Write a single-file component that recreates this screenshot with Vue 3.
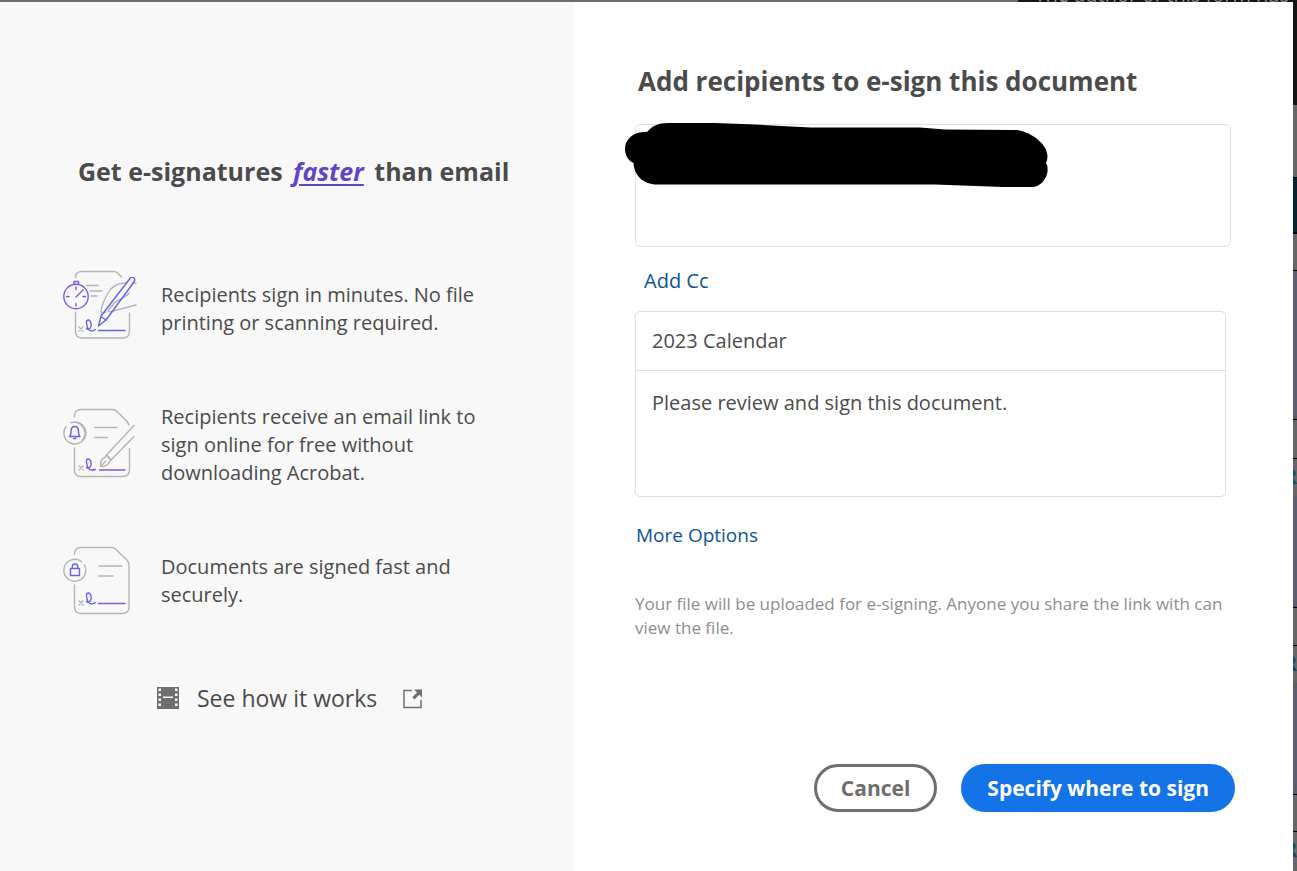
<template>
  <div class="page">
    <div class="page-top">
      <span class="page-note">The author of this form has</span>
    </div>

    <div class="page-body">
      <main class="dialog">
        <!-- Left side: benefits -->
        <section class="intro">
          <h2 class="intro-title">Get e-signatures <em>faster</em> than email</h2>

          <ul class="benefits">
            <li v-for="item in benefits" :key="item.icon" class="benefit">
              <svg
                v-if="item.icon === 'timer'"
                class="benefit-icon"
                viewBox="0 4 100 90"
                aria-hidden="true"
              >
                <g class="grey">
                  <path d="M25.500 17.500C25.500 13.500 28 11.500 32 11.500H64Q66 11.500 67.500 13L71.500 17" />
                  <path d="M25.500 52V71Q25.500 78 32.500 78H72.500Q79.500 78 79.500 71V53" />
                  <path d="M36.500 25.500H48M40 31H52M41 36H47" />
                  <path d="M77 23C69 22.500 62 26 58 33C55 38 52 45 51 51C51 54 53 54 56 52" />
                  <path d="M79 33C75 38 68 40 64 43L58 51C61 53 64 51 67 50L86 45M82 23H86" />
                  <path d="M29 67L33 71M33 67L29 71" />
                </g>
                <g class="violet">
                  <circle cx="26" cy="36.500" r="12.200" />
                  <path d="M24 24V21.500H28.500V24M26 27V29.500M26 43.500V46M16.500 36.500H19M33 36.500H35.500M26 37L33 30" />
                  <path d="M80 18.500Q82 16.500 84 18Q85.500 19.500 84 22L56 60L48.500 66L51 56Z" />
                  <path d="M51.500 57L56 60" />
                  <path d="M36.500 68.500C39 71 42 67 41 63C40 59 36 59 36.500 63C37 68 39 71 41.500 71Q43 71 45.500 69.500" />
                  <path d="M48.500 70.500H75" />
                </g>
              </svg>
              <svg
                v-else-if="item.icon === 'bell'"
                class="benefit-icon"
                viewBox="0 0 100 90"
                aria-hidden="true"
              >
                <g class="grey">
                  <path d="M24.500 17V16Q24.500 9.500 31 9.500H62Q65 9.500 67 11.500L76.500 21Q78 22.500 79 25" />
                  <path d="M24.500 48V70Q24.500 76.500 31 76.500H72.500Q79.500 76.500 79.500 69.500V48.500" />
                  <path d="M16 26.500A11 11 0 1 0 21 22.700M25.500 22.200A11 11 0 0 1 32 40.500" />
                  <path d="M44.500 27.500H67M44.500 37.500H57.500" />
                  <path d="M84 25.500L56.500 55L61 60L84 36.500" />
                  <path d="M56.500 55L61 60L59 62.500C57 66.500 53 67 50.500 66C51 62 50.500 59 55 57.500Z" />
                  <path d="M51 66L56 61" />
                  <path d="M29 66L33 70M33 66L29 70" />
                </g>
                <g class="violet">
                  <path d="M19.500 36.500C21 35.500 21 34 21 31.500C21 28.500 22.500 26.500 24.800 26.500S28.500 28.500 28.500 31.500C28.500 34 28.500 35.500 30 36.500ZM23.500 38.500H26" />
                  <path d="M36.500 67.500C39 70 42 66 41 62C40 58 36 58 36.500 62C37 67 39 70 41.500 70Q43 70 45.500 69.500" />
                  <path d="M49.500 70H75" />
                </g>
              </svg>
              <svg
                v-else
                class="benefit-icon"
                viewBox="0 -2 100 90"
                aria-hidden="true"
              >
                <g class="grey">
                  <path d="M24.500 16.500V16Q24.500 9.500 31 9.500H61Q64 9.500 66 11.500L76.500 21.500Q79 24 79 27V69Q79 75.500 72 75.500H31.500Q24.500 75.500 24.500 68.500V47" />
                  <path d="M31.500 23.500A11 11 0 1 0 34.500 27" />
                  <path d="M49 28H72M49 38H63" />
                  <path d="M29 63L33 67M33 63L29 67" />
                </g>
                <g class="violet">
                  <path d="M20.500 30.500H29.500V37.500H20.500ZM22.300 30.500V28.500Q22.300 26 25 26T27.700 28.500V30.500" />
                  <path d="M36.500 63.500C39 66 42 62 41 58C40 54 36 54 36.500 58C37 63 39 66 41.500 66Q43 66 45.500 64.500" />
                  <path d="M48.500 65.500H75" />
                </g>
              </svg>
              <p>{{ item.text }}</p>
            </li>
          </ul>

          <a href="#" class="how-link">
            <svg class="film-icon" viewBox="0 0 22 22" aria-hidden="true">
              <path class="film" d="M0 0H22V22H0Z" />
              <path
                class="holes"
                d="M1.500 1.500h2.500v2.500h-2.500zM1.500 6.500h2.500v2.500h-2.500zM1.500 11.500h2.500v2.500h-2.500zM1.500 16.500h2.500v2.500h-2.500zM18 1.500h2.500v2.500h-2.500zM18 6.500h2.500v2.500h-2.500zM18 11.500h2.500v2.500h-2.500zM18 16.500h2.500v2.500h-2.500zM6 9.500h10v1.500h-10z"
              />
            </svg>
            <span>See how it works</span>
            <svg class="open-icon" viewBox="0 0 20 20" aria-hidden="true">
              <path class="frame" d="M9 1.500H1V18.500H18V11" />
              <path class="arrow" d="M11 .5H19V8.500L16.200 5.800L11.500 10.500L9.300 8.300L14 3.500Z" />
            </svg>
          </a>
        </section>

        <!-- Right side: recipients form -->
        <form class="sign-form" @submit.prevent>
          <label for="recipients" class="form-title">Add recipients to e-sign this document</label>

          <div class="recipients-box">
            <textarea id="recipients" v-model="recipients" class="recipients"></textarea>
            <svg class="redaction" viewBox="0 0 424 66" aria-hidden="true">
              <path
                d="M22 10C27 4 34 1 42 1H90L130 2.500L186 5.500H295L320 7.500L390 8C402 8 422 20 422.500 34Q422.500 38 421 41C423 44 422.500 46 422.500 50C421 58 415 65 407 65H378L310 62.500H32C18 62.500 9 53 8.500 41C4 39 0 34 0 27C0 17 8 9.500 22 10Z"
              />
            </svg>
          </div>

          <button type="button" class="link-btn cc-btn">Add Cc</button>

          <div class="message-box">
            <input v-model="subject" type="text" class="subject" aria-label="Subject" />
            <textarea v-model="message" class="message" aria-label="Message"></textarea>
          </div>

          <button type="button" class="link-btn more-btn">More Options</button>

          <p class="hint">
            Your file will be uploaded for e-signing. Anyone you share the link with can view the file.
          </p>

          <div class="actions">
            <button type="button" class="btn cancel">Cancel</button>
            <button type="submit" class="btn primary">Specify where to sign</button>
          </div>
        </form>
      </main>

      <!-- Sliver of the document behind the dialog -->
      <div class="page-edge" aria-hidden="true">
        <div
          v-for="(part, index) in edgeParts"
          :key="index"
          :class="['edge-part', part.kind]"
          :style="{ flexGrow: part.size }"
        >
          <span v-if="part.kind === 'letter'">R</span>
        </div>
      </div>
    </div>
  </div>
</template>

<script setup>
import { ref } from "vue";

const recipients = ref("");
const subject = ref("2023 Calendar");
const message = ref("Please review and sign this document.");

const benefits = [
  {
    icon: "timer",
    text: "Recipients sign in minutes. No file printing or scanning required.",
  },
  {
    icon: "bell",
    text: "Recipients receive an email link to sign online for free without downloading Acrobat.",
  },
  {
    icon: "lock",
    text: "Documents are signed fast and securely.",
  },
];

// size is the share of the page height that each part takes
const edgeParts = [
  { kind: "toolbar", size: 104 },
  { kind: "paper", size: 73 },
  { kind: "banner", size: 55 },
  { kind: "paper lined", size: 36 },
  { kind: "field lined", size: 150 },
  { kind: "paper lined", size: 38 },
  { kind: "letter", size: 38 },
  { kind: "field", size: 112 },
  { kind: "paper lined", size: 37 },
  { kind: "letter", size: 38 },
  { kind: "field", size: 112 },
  { kind: "paper lined", size: 37 },
  { kind: "letter", size: 39 },
];
</script>

<style>
body {
  margin: 0;
  background: #fff;
}
</style>

<style scoped>
* {
  box-sizing: border-box;
}

.page {
  display: flex;
  flex-direction: column;
  min-height: 100vh;
  font-family: "Segoe UI", "Open Sans", "Noto Sans", sans-serif;
  color: #4b4b4b;
}

.page-top {
  display: flex;
  justify-content: flex-end;
  align-items: flex-end;
  height: 2px;
  overflow: hidden;
  background: #6b6b6b;
}

.page-note {
  padding: 0 8px 0 16px;
  background: #161414;
  color: #8a8a8a;
  font-size: 20px;
  line-height: 14px;
  white-space: nowrap;
}

.page-body {
  display: flex;
  flex: 1;
}

.dialog {
  display: grid;
  flex: 1;
  grid-template-columns: minmax(0, 574fr) minmax(0, 719fr);
  background: #fff;
}

/* Left side */
.intro {
  padding: 151px 50px 0;
  background: #f8f8f8;
}

.intro-title {
  margin: 0 0 75px 28px;
  font-size: 25px;
  line-height: 36px;
  font-weight: 700;
  white-space: nowrap;
}

.intro-title em {
  margin: 0 4px;
  color: #5c46cc;
  text-decoration: underline;
  text-decoration-thickness: 2px;
  text-underline-offset: 3px;
}

.benefits {
  display: flex;
  flex-direction: column;
  gap: 46px;
  margin: 0;
  padding: 0;
  list-style: none;
}

.benefit {
  display: flex;
  align-items: center;
  gap: 11px;
  min-height: 90px;
}

.benefit p {
  max-width: 330px;
  margin: 0;
  font-size: 20px;
  line-height: 28px;
}

.benefit-icon {
  flex: none;
  width: 100px;
  height: 90px;
  fill: none;
  stroke-width: 1.4;
  stroke-linecap: round;
  stroke-linejoin: round;
}

.grey {
  stroke: #b4b4b4;
}

.violet {
  stroke: #6a62e0;
}

.how-link {
  display: flex;
  align-items: center;
  margin: 54px 0 0 107px;
  color: #4b4b4b;
  font-size: 23px;
  line-height: 36px;
  text-decoration: none;
  white-space: nowrap;
}

.film-icon {
  width: 22px;
  height: 22px;
  margin-right: 18px;
}

.film {
  fill: #6e6e6e;
}

.holes {
  fill: #f8f8f8;
}

.open-icon {
  width: 20px;
  height: 20px;
  margin: 2px 0 0 26px;
}

.frame {
  fill: none;
  stroke: #707070;
  stroke-width: 1.5;
}

.arrow {
  fill: #707070;
}

/* Right side */
.sign-form {
  display: flex;
  flex-direction: column;
  align-items: flex-start;
  padding: 61px 62px 59px 61px;
}

.form-title {
  margin: 0 0 25px 3px;
  font-size: 26px;
  line-height: 36px;
  font-weight: 700;
  white-space: nowrap;
}

.recipients-box {
  position: relative;
  width: 100%;
  height: 123px;
}

textarea,
input {
  display: block;
  width: 100%;
  border: none;
  outline: none;
  background: none;
  color: inherit;
  font: inherit;
  resize: none;
}

.recipients {
  height: 100%;
  padding: 16px;
  border: 1px solid #e0e0e0;
  border-radius: 5px;
}

.redaction {
  position: absolute;
  top: -2px;
  left: -10px;
  width: 424px;
  height: 66px;
}

.link-btn {
  padding: 0;
  border: none;
  background: none;
  color: #0d5492;
  font: inherit;
  font-size: 20px;
  line-height: 28px;
  cursor: pointer;
}

.cc-btn {
  margin: 20px 0 16px 9px;
}

.message-box {
  align-self: stretch;
  margin-right: 5px;
  border: 1px solid #e0e0e0;
  border-radius: 5px;
  font-size: 20px;
  line-height: 28px;
}

.subject {
  height: 59px;
  padding: 0 16px 2px;
  border-bottom: 1px solid #e0e0e0;
}

.message {
  height: 125px;
  padding: 18px 16px;
}

.more-btn {
  margin: 24px 0 0 1px;
  font-size: 19px;
}

.hint {
  margin: 43px 0 0;
  color: #8e8e8e;
  font-size: 17px;
  line-height: 24px;
}

.actions {
  display: flex;
  align-self: flex-end;
  gap: 24px;
  margin: auto -4px 0 0;
}

.btn {
  height: 48px;
  padding: 0 24px;
  border: none;
  border-radius: 24px;
  font: inherit;
  font-size: 21px;
  font-weight: 700;
  white-space: nowrap;
  cursor: pointer;
}

.cancel {
  border: 3px solid #6e6e6e;
  background: #fff;
  color: #6e6e6e;
}

.primary {
  padding: 0 26px;
  background: #1473e6;
  color: #fff;
}

/* Document edge */
.page-edge {
  display: flex;
  flex-direction: column;
  width: 4px;
  overflow: hidden;
}

.edge-part {
  flex-basis: 0;
  min-height: 0;
  overflow: hidden;
}

.toolbar {
  background: #141313;
}

.paper {
  background: #666;
}

.lined,
.letter {
  border-top: 1px solid #000;
}

.banner {
  border: solid #000;
  border-width: 1px 0;
  background: #06222e;
}

.field {
  background: #5a5d6c;
}

.letter {
  display: flex;
  justify-content: flex-end;
  background: #666;
  color: #0f4a6c;
  font-size: 22px;
  font-weight: 700;
  line-height: 32px;
}
</style>
